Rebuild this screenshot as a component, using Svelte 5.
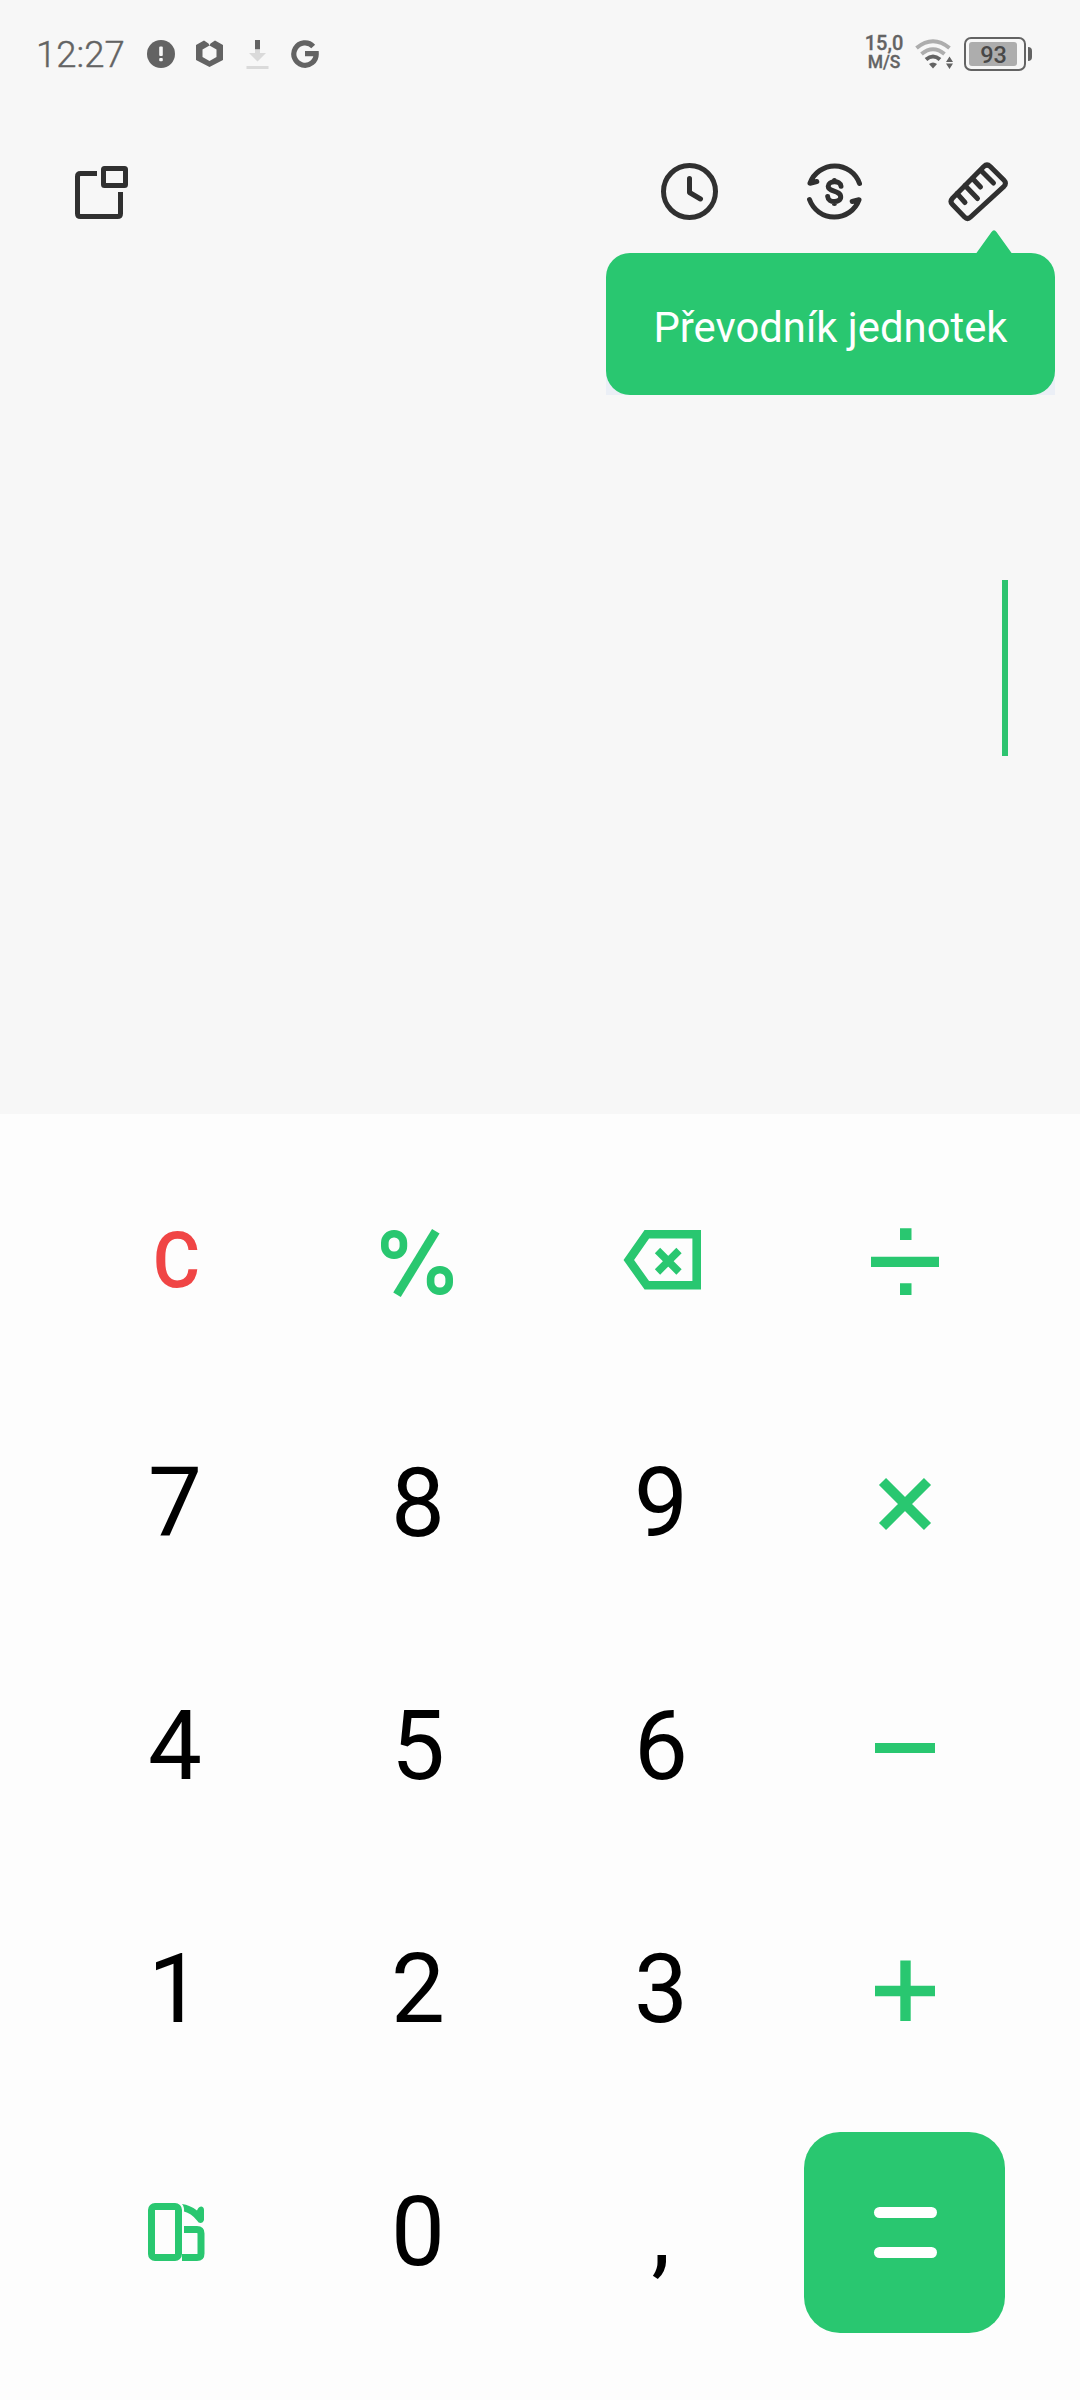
<script>
  const keys = [
    { id: 'clear', label: 'C', type: 'clear' },
    { id: 'percent', type: 'icon' },
    { id: 'backspace', type: 'icon' },
    { id: 'divide', type: 'icon' },
    { id: '7', label: '7', type: 'digit' },
    { id: '8', label: '8', type: 'digit' },
    { id: '9', label: '9', type: 'digit' },
    { id: 'multiply', type: 'icon' },
    { id: '4', label: '4', type: 'digit' },
    { id: '5', label: '5', type: 'digit' },
    { id: '6', label: '6', type: 'digit' },
    { id: 'minus', type: 'icon' },
    { id: '1', label: '1', type: 'digit' },
    { id: '2', label: '2', type: 'digit' },
    { id: '3', label: '3', type: 'digit' },
    { id: 'plus', type: 'icon' },
    { id: 'rotate', type: 'icon' },
    { id: '0', label: '0', type: 'digit' },
    { id: 'comma', label: ',', type: 'digit' },
    { id: 'equals', type: 'equals' }
  ];

  let battery = 93;
  let tooltip = 'Převodník jednotek';
</script>

<main class="screen">
  <div class="status-bar">
    <time class="clock">12:27</time>
    <div class="notifications">
      <svg width="30" height="30" viewBox="0 0 30 30">
        <circle cx="15" cy="15" r="14" fill="#636363" />
        <rect x="13.2" y="7.5" width="3.6" height="9.5" rx="1" fill="#f7f7f7" />
        <rect x="13.2" y="19" width="3.6" height="3.2" rx="1" fill="#f7f7f7" />
      </svg>
      <svg width="30" height="30" viewBox="0 0 30 30">
        <path fill="#636363" fill-rule="evenodd" d="M10 1.5 L14.5 4.5 L15.5 6.5 L16.5 4.5 L21 1.5 L29 6 V21 L15.5 28 L2 21 V6 Z M15.5 6.5 L8.5 10.5 V18 L15.5 22 L22.5 18 V10.5 Z" />
      </svg>
      <svg width="30" height="30" viewBox="0 0 30 30">
        <rect x="13" y="1" width="5" height="9.5" fill="#636363" />
        <path fill="#dadada" d="M13 10.5 H18 V14 H24 L15.5 22.5 L7 14 H13 Z" />
        <rect x="4.5" y="27" width="22" height="3" fill="#dadada" />
      </svg>
      <svg width="30" height="30" viewBox="0 0 30 30" fill="none" stroke="#636363" stroke-width="5.2">
        <path d="M23.2 7.4 A11.2 11.2 0 1 0 26.2 14.6 H15" />
      </svg>
    </div>

    <div class="speed">
      <span class="speed-value">15,0</span>
      <span class="speed-unit">M/S</span>
    </div>
    <svg class="wifi" width="40" height="30" viewBox="0 0 40 30" fill="none">
      <path d="M1.5 9 Q18 -4.5 34.5 9" stroke="#adadad" stroke-width="4" />
      <path d="M6.5 15 Q18 5.5 29.5 15" stroke="#adadad" stroke-width="4" />
      <path d="M11 20.5 Q18 14.5 25 20.5" stroke="#636363" stroke-width="4" />
      <path d="M14 25 Q18 22 22 25 L18 29.5 Z" fill="#636363" />
      <path d="M31 23 L34.5 17.5 L38 23 Z M31 24.5 H38 L34.5 30 Z" fill="#636363" />
    </svg>
    <div class="battery">
      <div class="battery-body">
        <span class="battery-level">{battery}</span>
      </div>
      <span class="battery-nub"></span>
    </div>
  </div>

  <header class="toolbar">
    <button class="tool" aria-label="Plovoucí okno">
      <svg width="61" height="61" viewBox="0 0 61 61" fill="none" stroke="#303030" stroke-width="5">
        <path d="M26 12.5 H9.5 Q6.5 12.5 6.5 15.5 V52.5 Q6.5 55.5 9.5 55.5 H46.5 Q49.5 55.5 49.5 52.5 V31" />
        <rect x="32.5" y="7.5" width="22" height="17" rx="1" />
      </svg>
    </button>
    <div class="tools">
      <button class="tool" aria-label="Historie">
        <svg width="61" height="61" viewBox="0 0 61 61" fill="none" stroke="#303030" stroke-width="5" stroke-linecap="round" stroke-linejoin="round">
          <circle cx="30.5" cy="30.5" r="26" />
          <path d="M30.5 17.5 V31.5 L41.5 38" />
        </svg>
      </button>
      <button class="tool" aria-label="Měna">
        <svg width="61" height="61" viewBox="0 0 61 61" fill="none" stroke="#303030" stroke-width="5" stroke-linecap="round" stroke-linejoin="round">
          <path d="M55.5 22.5 A26.3 26.3 0 0 0 6 22.2 L12.8 20.5" />
          <path d="M5.5 38.5 A26.3 26.3 0 0 0 55 38.8 L48.2 40.5" />
          <path d="M37 25.3 C36.2 18.8 24.2 19.5 24.2 25.3 C24.2 31.5 36.7 28.8 36.7 36 C36.7 42 24.2 42.2 23.7 35.6 M30.4 20.5 V19.5 M30.4 41.5 V42.5" />
        </svg>
      </button>
      <button class="tool" aria-label="Převodník jednotek">
        <svg width="61" height="61" viewBox="0 0 61 61" fill="none" stroke="#303030" stroke-width="5" stroke-linecap="round" stroke-linejoin="round">
          <path d="M35.8 5.5 Q39 2.5 42.2 5.5 L56 19.3 Q59 22.3 56 25.3 L22.6 56 Q19.5 59 16.5 56 L4.5 43.5 Q1.5 40.5 4.5 37.2 Z" />
          <path d="M9 32.5 L17 41.5 M17 24.5 L29.5 37.5 M24.5 17.5 L32.5 26 M33 9.5 L45.5 22" />
        </svg>
      </button>
    </div>
    <div class="tooltip-box">
      <svg class="tooltip-arrow" width="40" height="26" viewBox="0 0 40 26">
        <path d="M1 26 L17.5 3 Q20 -0.5 22.5 3 L39 26 Z" fill="#29c770" />
      </svg>
      <div class="tooltip">{tooltip}</div>
    </div>
  </header>

  <section class="display">
    <span class="cursor"></span>
  </section>

  <section class="keypad">
    {#each keys as key (key.id)}
      <button class="key {key.type}" aria-label={key.id}>
        {#if key.type === 'equals'}
          <span class="equals-face">
            <span class="equals-bar"></span>
            <span class="equals-bar"></span>
          </span>
        {:else if key.type === 'icon'}
          <svg width="81" height="81" viewBox="0 0 81 81" fill="none" stroke="#29c770">
            {#if key.id === 'percent'}
              <rect x="6.8" y="13.8" width="18.6" height="21.4" rx="9" stroke-width="7.6" />
              <rect x="52.6" y="49.8" width="18.6" height="21.4" rx="9" stroke-width="7.6" />
              <line x1="57.8" y1="11.2" x2="19" y2="74.8" stroke-width="8.8" />
            {:else if key.id === 'backspace'}
              <path d="M25.8 14.3 H75.7 V65.2 H25.8 L7.8 40 Z" stroke-width="8.6" />
              <path d="M36.5 30.5 L58 52 M58 30.5 L36.5 52" stroke-width="7.5" />
            {:else if key.id === 'divide'}
              <path d="M7 41.8 H75" stroke-width="10.2" />
              <path d="M36 14.2 H47.5 M36 69.2 H47.5" stroke-width="11.8" />
            {:else if key.id === 'multiply'}
              <path d="M18.5 18.5 L63.5 63.5 M63.5 18.5 L18.5 63.5" stroke-width="10" />
            {:else if key.id === 'minus'}
              <path d="M11 42 H71" stroke-width="10" />
            {:else if key.id === 'plus'}
              <path d="M11 42 H71 M41.5 11.5 V72" stroke-width="10.4" />
            {:else}
              <rect x="16.5" y="14.5" width="27" height="51" rx="3.5" stroke-width="7" />
              <path d="M49 37.5 H62 Q66 37.5 66 41.5 V61.5 Q66 65.5 62 65.5 H47" stroke-width="7" />
              <path d="M47 12 Q55 13 62 18.5 Q63.5 14.5 66.5 14.5 Q69 15 69 18 V28 Q68 31 65.5 31 Q63.5 31 62 28.5 Q56 21 49 19.5 Q49.5 15 47 12 Z" fill="#29c770" stroke="none" />
            {/if}
          </svg>
        {:else}
          <span class="label">{key.label}</span>
        {/if}
      </button>
    {/each}
  </section>
</main>

<style>
  :global(body) {
    margin: 0;
    background-color: #f7f7f7;
    font-family: Roboto, "Noto Sans", sans-serif;
  }

  button {
    padding: 0;
    border: none;
    background: none;
    font-family: inherit;
  }

  svg {
    display: block;
  }

  .screen {
    width: 1080px;
    height: 2400px;
    display: flex;
    flex-direction: column;
    overflow: hidden;
    background-color: #f7f7f7;
  }

  /* Status bar */
  .status-bar {
    height: 108px;
    padding: 0 48px 0 36px;
    box-sizing: border-box;
    display: flex;
    align-items: center;
    color: #636363;
  }

  .clock {
    width: 110px;
    font-size: 36.5px;
    font-weight: 300;
    line-height: 44px;
    padding-top: 2px;
    -webkit-text-stroke: 0.4px #636363;
  }

  .notifications {
    display: flex;
    gap: 18px;
    flex-grow: 1;
  }

  .speed {
    width: 40px;
    margin-right: 10px;
    padding-right: 2px;
    padding-bottom: 2px;
    box-sizing: border-box;
    display: flex;
    flex-direction: column;
    align-items: center;
    font-weight: 500;
  }

  .speed-value {
    font-size: 20px;
    line-height: 19px;
    -webkit-text-stroke: 0.3px #636363;
  }

  .speed-unit {
    font-size: 17.5px;
    line-height: 19px;
    -webkit-text-stroke: 0.3px #636363;
  }

  .wifi {
    margin-right: 9px;
  }

  .battery {
    display: flex;
    align-items: center;
    gap: 2px;
  }

  .battery-body {
    width: 62px;
    height: 34px;
    padding: 3px;
    box-sizing: border-box;
    border: 2.5px solid #636363;
    border-radius: 7px;
    display: flex;
  }

  .battery-level {
    width: 48px;
    padding-left: 1px;
    box-sizing: border-box;
    border-radius: 3px;
    background-color: #adadad;
    color: #484848;
    font-size: 23.5px;
    font-weight: 500;
    line-height: 26px;
    height: 24px;
    text-align: center;
  }

  .battery-nub {
    width: 4px;
    height: 14px;
    border-radius: 0 4px 4px 0;
    background-color: #636363;
  }

  /* Toolbar */
  .toolbar {
    position: relative;
    height: 167px;
    padding: 53px 71px 0;
    box-sizing: border-box;
    display: flex;
    justify-content: space-between;
    align-items: flex-start;
  }

  .tools {
    display: flex;
    gap: 83.5px;
  }

  .tooltip-box {
    position: absolute;
    top: 121px;
    right: 25px;
    width: 449px;
    background: linear-gradient(#ebeff6, #ebeff6) bottom / 100% 22px no-repeat;
  }

  .tooltip-arrow {
    margin-left: 368px;
    margin-bottom: -2px;
  }

  .tooltip {
    height: 142px;
    border-radius: 24px;
    background-color: #29c770;
    color: #fff;
    font-size: 41.8px;
    line-height: 149px;
    text-align: center;
    white-space: nowrap;
  }

  /* Display */
  .display {
    height: 839px;
    padding: 305px 72px 0 0;
    box-sizing: border-box;
    display: flex;
    justify-content: flex-end;
  }

  .cursor {
    width: 6px;
    height: 176px;
    background-color: #2ec470;
  }

  /* Keypad */
  .keypad {
    flex-grow: 1;
    padding: 25px 54px 46px;
    display: grid;
    grid-template-columns: repeat(4, 243px);
    grid-template-rows: repeat(5, 243px);
    background-color: #fdfdfd;
  }

  .key {
    display: flex;
    align-items: center;
    justify-content: center;
  }

  .digit {
    padding: 0 1px 2px 0;
    color: #000;
    font-size: 96px;
  }

  .clear {
    padding-left: 1px;
    color: #f04545;
    font-size: 78px;
    font-weight: 500;
  }

  .clear .label {
    transform: scaleX(0.93);
  }

  .equals-face {
    width: 201px;
    height: 201px;
    border-radius: 36px;
    background-color: #29c770;
    display: flex;
    flex-direction: column;
    align-items: center;
    justify-content: center;
    gap: 29px;
  }

  .equals-bar {
    width: 63px;
    height: 11px;
    margin-left: 1px;
    border-radius: 6px;
    background-color: #fff;
  }
</style>
